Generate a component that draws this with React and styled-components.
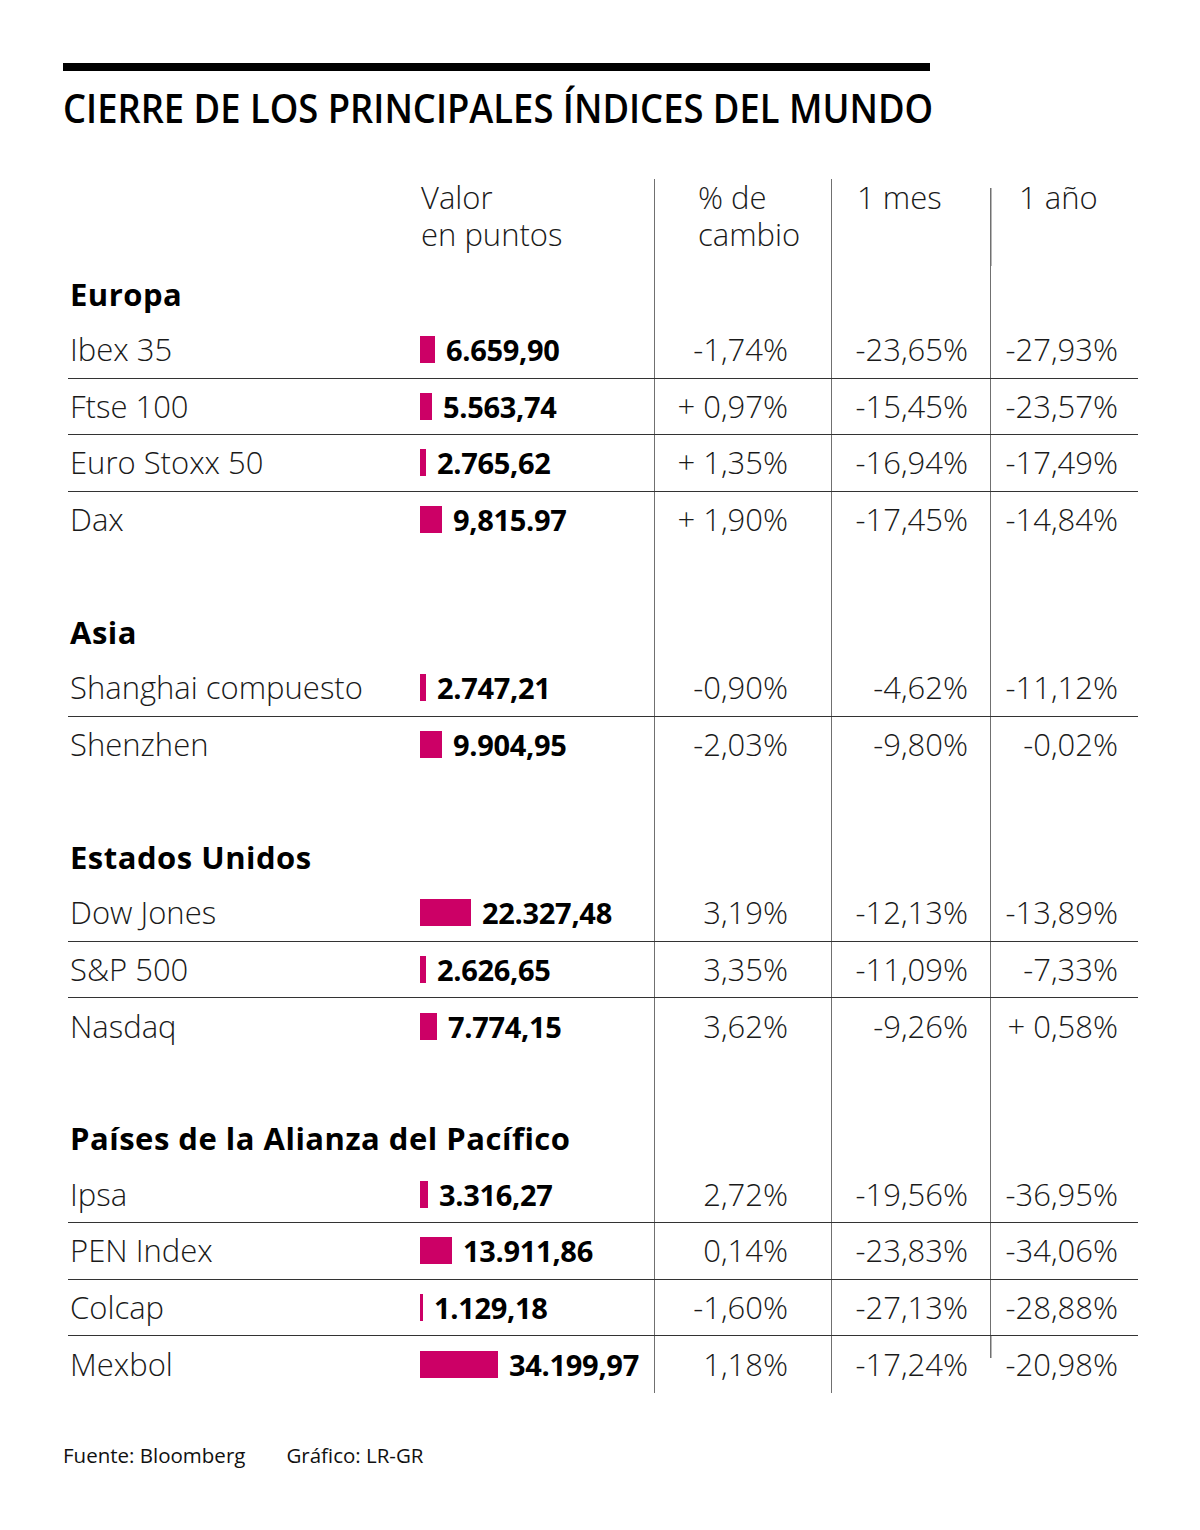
import React from 'react';
import styled, { createGlobalStyle } from 'styled-components';

const GlobalStyle = createGlobalStyle`
  body {
    margin: 0;
    background: #fff;
    font-family: "Open Sans", "Liberation Sans", sans-serif;
    color: #1a1a1a;
  }
`;

const sections = [
  {
    name: 'Europa',
    rows: [
      ['Ibex 35', 15, '6.659,90', '-1,74%', '-23,65%', '-27,93%'],
      ['Ftse 100', 12, '5.563,74', '+ 0,97%', '-15,45%', '-23,57%'],
      ['Euro Stoxx 50', 6, '2.765,62', '+ 1,35%', '-16,94%', '-17,49%'],
      ['Dax', 22, '9,815.97', '+ 1,90%', '-17,45%', '-14,84%'],
    ],
  },
  {
    name: 'Asia',
    rows: [
      ['Shanghai compuesto', 6, '2.747,21', '-0,90%', '-4,62%', '-11,12%'],
      ['Shenzhen', 22, '9.904,95', '-2,03%', '-9,80%', '-0,02%'],
    ],
  },
  {
    name: 'Estados Unidos',
    rows: [
      ['Dow Jones', 51, '22.327,48', '3,19%', '-12,13%', '-13,89%'],
      ['S&P 500', 6, '2.626,65', '3,35%', '-11,09%', '-7,33%'],
      ['Nasdaq', 17, '7.774,15', '3,62%', '-9,26%', '+ 0,58%'],
    ],
  },
  {
    name: 'Países de la Alianza del Pacífico',
    rows: [
      ['Ipsa', 8, '3.316,27', '2,72%', '-19,56%', '-36,95%'],
      ['PEN Index', 32, '13.911,86', '0,14%', '-23,83%', '-34,06%'],
      ['Colcap', 3, '1.129,18', '-1,60%', '-27,13%', '-28,88%'],
      ['Mexbol', 78, '34.199,97', '1,18%', '-17,24%', '-20,98%'],
    ],
  },
];

const Page = styled.div`
  width: 1200px;
  min-height: 1530px;
  box-sizing: border-box;
  padding: 63px 0 0 63px;
`;

const TopRule = styled.div`
  width: 867px;
  height: 8px;
  background: #000;
`;

const Title = styled.h1`
  margin: 15px 0 0;
  font-size: 39px;
  line-height: 44px;
  font-weight: 600;
  color: #000;
  white-space: nowrap;
  transform: scaleX(0.932);
  transform-origin: left center;
`;

const Table = styled.div`
  width: 1070px;
  margin: 49px 0 0 5px;
`;

const Row = styled.div`
  display: grid;
  grid-template-columns: 352px 234px 177px 159px 148px;
  height: ${(p) => p.$h || 56.5}px;
  box-sizing: border-box;
  border-bottom: ${(p) => (p.$ruled ? '1.5px solid #333' : 'none')};
`;

const lineColor = '#707070';

const Cell = styled.div`
  display: flex;
  flex-direction: ${(p) => (p.$top ? 'column' : 'row')};
  align-items: ${(p) => (p.$top ? 'flex-start' : 'center')};
  justify-content: ${(p) => (p.$right ? 'flex-end' : 'flex-start')};
  padding: ${(p) => p.$pad || '0'};
  box-sizing: border-box;
  font-size: 31px;
  line-height: 37px;
  font-weight: 300;
  white-space: nowrap;
  border-left: ${(p) => (p.$line === 'full' ? `1.5px solid ${lineColor}` : 'none')};
  background: ${(p) =>
    p.$line === 'from8'
      ? `linear-gradient(${lineColor}, ${lineColor}) 0 9px / 1.5px 100% no-repeat`
      : p.$line === 'short'
      ? `linear-gradient(${lineColor}, ${lineColor}) 0 0 / 1.5px 22px no-repeat`
      : 'none'};
`;

const HeadLine = styled.span`
  display: block;
  height: 37px;
  line-height: 37px;
`;

const Heading = styled.div`
  grid-column: 1 / 3;
  display: flex;
  align-items: center;
  padding-left: 2px;
  font-size: 31px;
  font-weight: 700;
  letter-spacing: 0.5px;
  color: #000;
  white-space: nowrap;
`;

const Bar = styled.span`
  display: block;
  flex: none;
  width: ${(p) => p.$w}px;
  height: 27px;
  background: #cc0066;
  margin-right: 11px;
`;

const Points = styled.span`
  font-size: 29px;
  font-weight: 700;
  color: #000;
  letter-spacing: -0.3px;
`;

const Footer = styled.div`
  display: flex;
  gap: 41px;
  margin-top: 48px;
  font-size: 20.5px;
  line-height: 28px;
  font-weight: 400;
  color: #111;
`;

const Spacer = () => (
  <Row $h={55.5}>
    <Cell />
    <Cell />
    <Cell $line="full" />
    <Cell $line="full" />
    <Cell $line="full" />
  </Row>
);

const DataRow = ({ row, ruled, last }) => {
  const [name, bar, points, change, month, year] = row;
  return (
    <Row $ruled={ruled}>
      <Cell $pad="0 0 0 2px">{name}</Cell>
      <Cell>
        <Bar $w={bar} />
        <Points>{points}</Points>
      </Cell>
      <Cell $line="full" $right $pad="0 43px 0 0">{change}</Cell>
      <Cell $line="full" $right $pad="0 22px 0 0">{month}</Cell>
      <Cell $line={last ? 'short' : 'full'} $right $pad="0 20px 0 0">{year}</Cell>
    </Row>
  );
};

const Section = ({ section, lastSection }) => (
  <>
    <Row>
      <Heading>{section.name}</Heading>
      <Cell $line="full" />
      <Cell $line="full" />
      <Cell $line="full" />
    </Row>
    {section.rows.map((row, i) => (
      <DataRow
        key={row[0]}
        row={row}
        ruled={i < section.rows.length - 1}
        last={lastSection && i === section.rows.length - 1}
      />
    ))}
    {!lastSection && <Spacer />}
  </>
);

export default function App() {
  return (
    <Page>
      <GlobalStyle />
      <TopRule />
      <Title>CIERRE DE LOS PRINCIPALES ÍNDICES DEL MUNDO</Title>
      <Table>
        <Row $h={86.5}>
          <Cell />
          <Cell $top $pad="0 0 0 1px">
            <HeadLine>Valor</HeadLine>
            <HeadLine>en puntos</HeadLine>
          </Cell>
          <Cell $top $line="full" $pad="0 0 0 43px">
            <HeadLine>% de</HeadLine>
            <HeadLine>cambio</HeadLine>
          </Cell>
          <Cell $top $line="full" $pad="0 0 0 25px">
            <HeadLine>1 mes</HeadLine>
          </Cell>
          <Cell $top $line="from8" $pad="0 0 0 29px">
            <HeadLine>1 año</HeadLine>
          </Cell>
        </Row>
        {sections.map((s, i) => (
          <Section key={s.name} section={s} lastSection={i === sections.length - 1} />
        ))}
      </Table>
      <Footer>
        <span>Fuente: Bloomberg</span>
        <span>Gráfico: LR-GR</span>
      </Footer>
    </Page>
  );
}
